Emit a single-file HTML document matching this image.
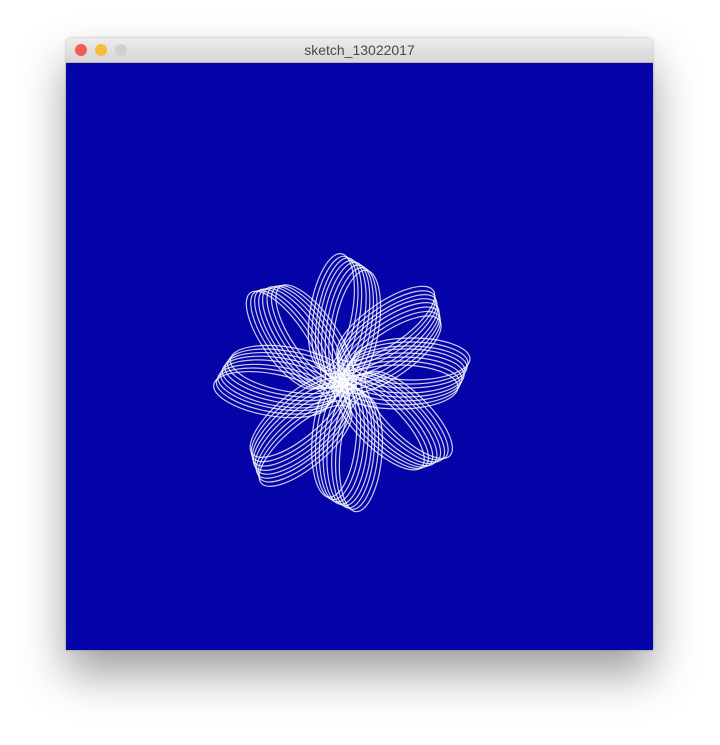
<!DOCTYPE html>
<html><head><meta charset="utf-8"><style>
html,body{margin:0;padding:0;background:#fff;width:720px;height:745px;overflow:hidden}
.win{position:absolute;left:66px;top:38px;width:587px;height:612px;box-shadow:0 24px 45px rgba(0,0,0,0.38),0 0 2px rgba(0,0,0,0.3);border-radius:5px 5px 0 0}
.bar{height:25px;background:linear-gradient(#ececec,#d6d6d6);border-radius:5px 5px 0 0;border-bottom:1px solid #b5b5b5;box-sizing:border-box;position:relative;font:14px "Liberation Sans",sans-serif;color:#4a4a4a;text-align:center;line-height:24px}
.d{position:absolute;top:6px;width:12px;height:12px;border-radius:50%}
.c{position:absolute;top:25px;left:0;width:587px;height:587px;background:#0404a8}
</style></head><body>
<div class="win">
<div class="bar"><span class="d" style="left:9px;background:#ee5c55"></span><span class="d" style="left:29px;background:#f6bd3b"></span><span class="d" style="left:49px;background:#d0d0d0"></span>sketch_13022017</div>
<div class="c">
<svg width="587" height="587" viewBox="66 63 587 587">
<defs>
<g id="p" fill="none" stroke="#fff" stroke-width="1.2" stroke-opacity="0.8">
<ellipse cx="400" cy="383" rx="60" ry="22"/>
<ellipse cx="402" cy="379" rx="60" ry="22"/>
<ellipse cx="404" cy="375" rx="60" ry="22"/>
<ellipse cx="406" cy="371" rx="59" ry="22"/>
<ellipse cx="408" cy="367" rx="59" ry="21"/>
<ellipse cx="410" cy="363" rx="58" ry="21"/>
<ellipse cx="412" cy="359" rx="58" ry="21"/>
<ellipse cx="398" cy="387" rx="60" ry="22"/>
</g>
</defs>
<g>
<use href="#p" transform="rotate(0 343 383)"/>
<use href="#p" transform="rotate(-35 343 383)"/>
<use href="#p" transform="rotate(-80 343 383)"/>
<use href="#p" transform="rotate(-125 343 383)"/>
<use href="#p" transform="rotate(-170 343 383)"/>
<use href="#p" transform="rotate(140 343 383)"/>
<use href="#p" transform="rotate(95 343 383)"/>
<use href="#p" transform="rotate(45 343 383)"/>
</g>
<circle cx="343" cy="383" r="14" fill="#fff" opacity="0.5"/>
</svg>
</div>
</div>
</body></html>
